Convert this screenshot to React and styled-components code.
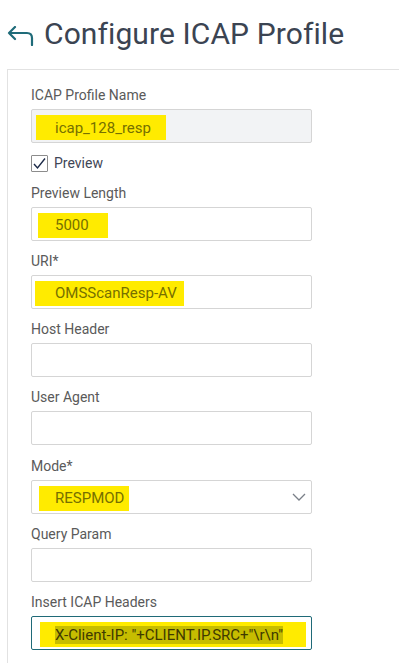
import styled, { createGlobalStyle } from "styled-components";

const GlobalStyle = createGlobalStyle`
  html, body {
    margin: 0;
    padding: 0;
    background: #ffffff;
    overflow: hidden;
  }
  body {
    font-family: Roboto, "Liberation Sans", Arial, sans-serif;
  }
`;

const Page = styled.div`
  width: 399px;
  height: 663px;
  overflow: hidden;
  padding-top: 16px;
  box-sizing: border-box;
`;

const Header = styled.div`
  display: flex;
  align-items: center;
  height: 36px;
  padding-left: 7px;
  gap: 10px;
  h1 {
    margin: 0;
    font-size: 30px;
    line-height: 36px;
    font-weight: 400;
    color: #3b4452;
    letter-spacing: 0.1px;
  }
`;

const BackIcon = styled.svg`
  width: 27px;
  height: 20px;
  margin-top: 4px;
  flex-shrink: 0;
`;

const Panel = styled.div`
  margin: 17px -30px 0 7px;
  border: 1px solid #e2e2e2;
  border-right: none;
  padding: 15px 0 40px 23px;
  display: flex;
  flex-direction: column;
  gap: 10.3px;
`;

const Group = styled.div`
  display: flex;
  flex-direction: column;
  gap: 4px;
`;

const Label = styled.label`
  font-size: 14px;
  line-height: 20px;
  color: #5a5a5a;
`;

const Box = styled.div`
  position: relative;
  width: 281px;
  height: 34px;
  box-sizing: border-box;
  border: 1px solid ${(p) => (p.$focused ? "#1f6a78" : "#d5d5d5")};
  border-radius: 2px;
  background: ${(p) => (p.$disabled ? "#f2f3f5" : "#ffffff")};
  padding-top: 5px;
  display: flex;
  align-items: flex-start;
`;

const Mark = styled.span`
  display: flex;
  align-items: center;
  box-sizing: border-box;
  height: 25px;
  margin-left: ${(p) => p.$x}px;
  width: ${(p) => p.$w}px;
  padding-left: ${(p) => p.$pl}px;
  background: #ffeb00;
  font-size: 15px;
  color: #767000;
  white-space: nowrap;
`;

const Selected = styled.span`
  background: #c6bd00;
  color: #3f3a00;
  line-height: 18px;
`;

const Chevron = styled.svg`
  position: absolute;
  right: 5px;
  top: 12px;
  width: 14px;
  height: 8px;
`;

const CheckRow = styled.label`
  display: flex;
  align-items: center;
  gap: 6px;
  font-size: 14px;
  line-height: 20px;
  color: #3f4656;
  margin-bottom: -1px;
`;

const CheckBox = styled.span`
  width: 17px;
  height: 17px;
  box-sizing: border-box;
  border: 1px solid #8c8c8c;
  border-radius: 1px;
  display: flex;
  align-items: center;
  justify-content: center;
  background: #fff;
`;

function Field({ label, value, mark, disabled, focused, select, children }) {
  return (
    <Group>
      <Label>{label}</Label>
      <Box $disabled={disabled} $focused={focused}>
        {mark && (
          <Mark $x={mark.x} $w={mark.w} $pl={mark.pl}>
            {children || value}
          </Mark>
        )}
        {select && (
          <Chevron viewBox="0 0 14 8">
            <path d="M1 1 L7 7 L13 1" fill="none" stroke="#7a7f88" strokeWidth="1.3" />
          </Chevron>
        )}
      </Box>
    </Group>
  );
}

export default function App() {
  return (
    <Page>
      <GlobalStyle />
      <Header>
        <BackIcon viewBox="0 0 27 20">
          <path
            d="M2 7 H20 Q25 7 25 12 V19 M8 1 L2 7 L8 13"
            fill="none"
            stroke="#1f6b79"
            strokeWidth="2.2"
            strokeLinecap="round"
            strokeLinejoin="round"
          />
        </BackIcon>
        <h1>Configure ICAP Profile</h1>
      </Header>
      <Panel>
        <Field
          label="ICAP Profile Name"
          value="icap_128_resp"
          disabled
          mark={{ x: 4, w: 130, pl: 19 }}
        />
        <CheckRow>
          <CheckBox>
            <svg width="15" height="15" viewBox="0 0 15 15">
              <path d="M2 8 L5.5 12 L13 2.5" fill="none" stroke="#1c2a48" strokeWidth="1.4" />
            </svg>
          </CheckBox>
          Preview
        </CheckRow>
        <Field label="Preview Length" value="5000" mark={{ x: 6, w: 70, pl: 17 }} />
        <Field label="URI*" value="OMSScanResp-AV" mark={{ x: 3, w: 149, pl: 20 }} />
        <Field label="Host Header" />
        <Field label="User Agent" />
        <Field label="Mode*" value="RESPMOD" select mark={{ x: 7, w: 90, pl: 16 }} />
        <Field label="Query Param" />
        <Field label="Insert ICAP Headers" focused mark={{ x: 8, w: 266, pl: 15 }}>
          <Selected>X-Client-IP: "+CLIENT.IP.SRC+"\r\n"</Selected>
        </Field>
      </Panel>
    </Page>
  );
}
